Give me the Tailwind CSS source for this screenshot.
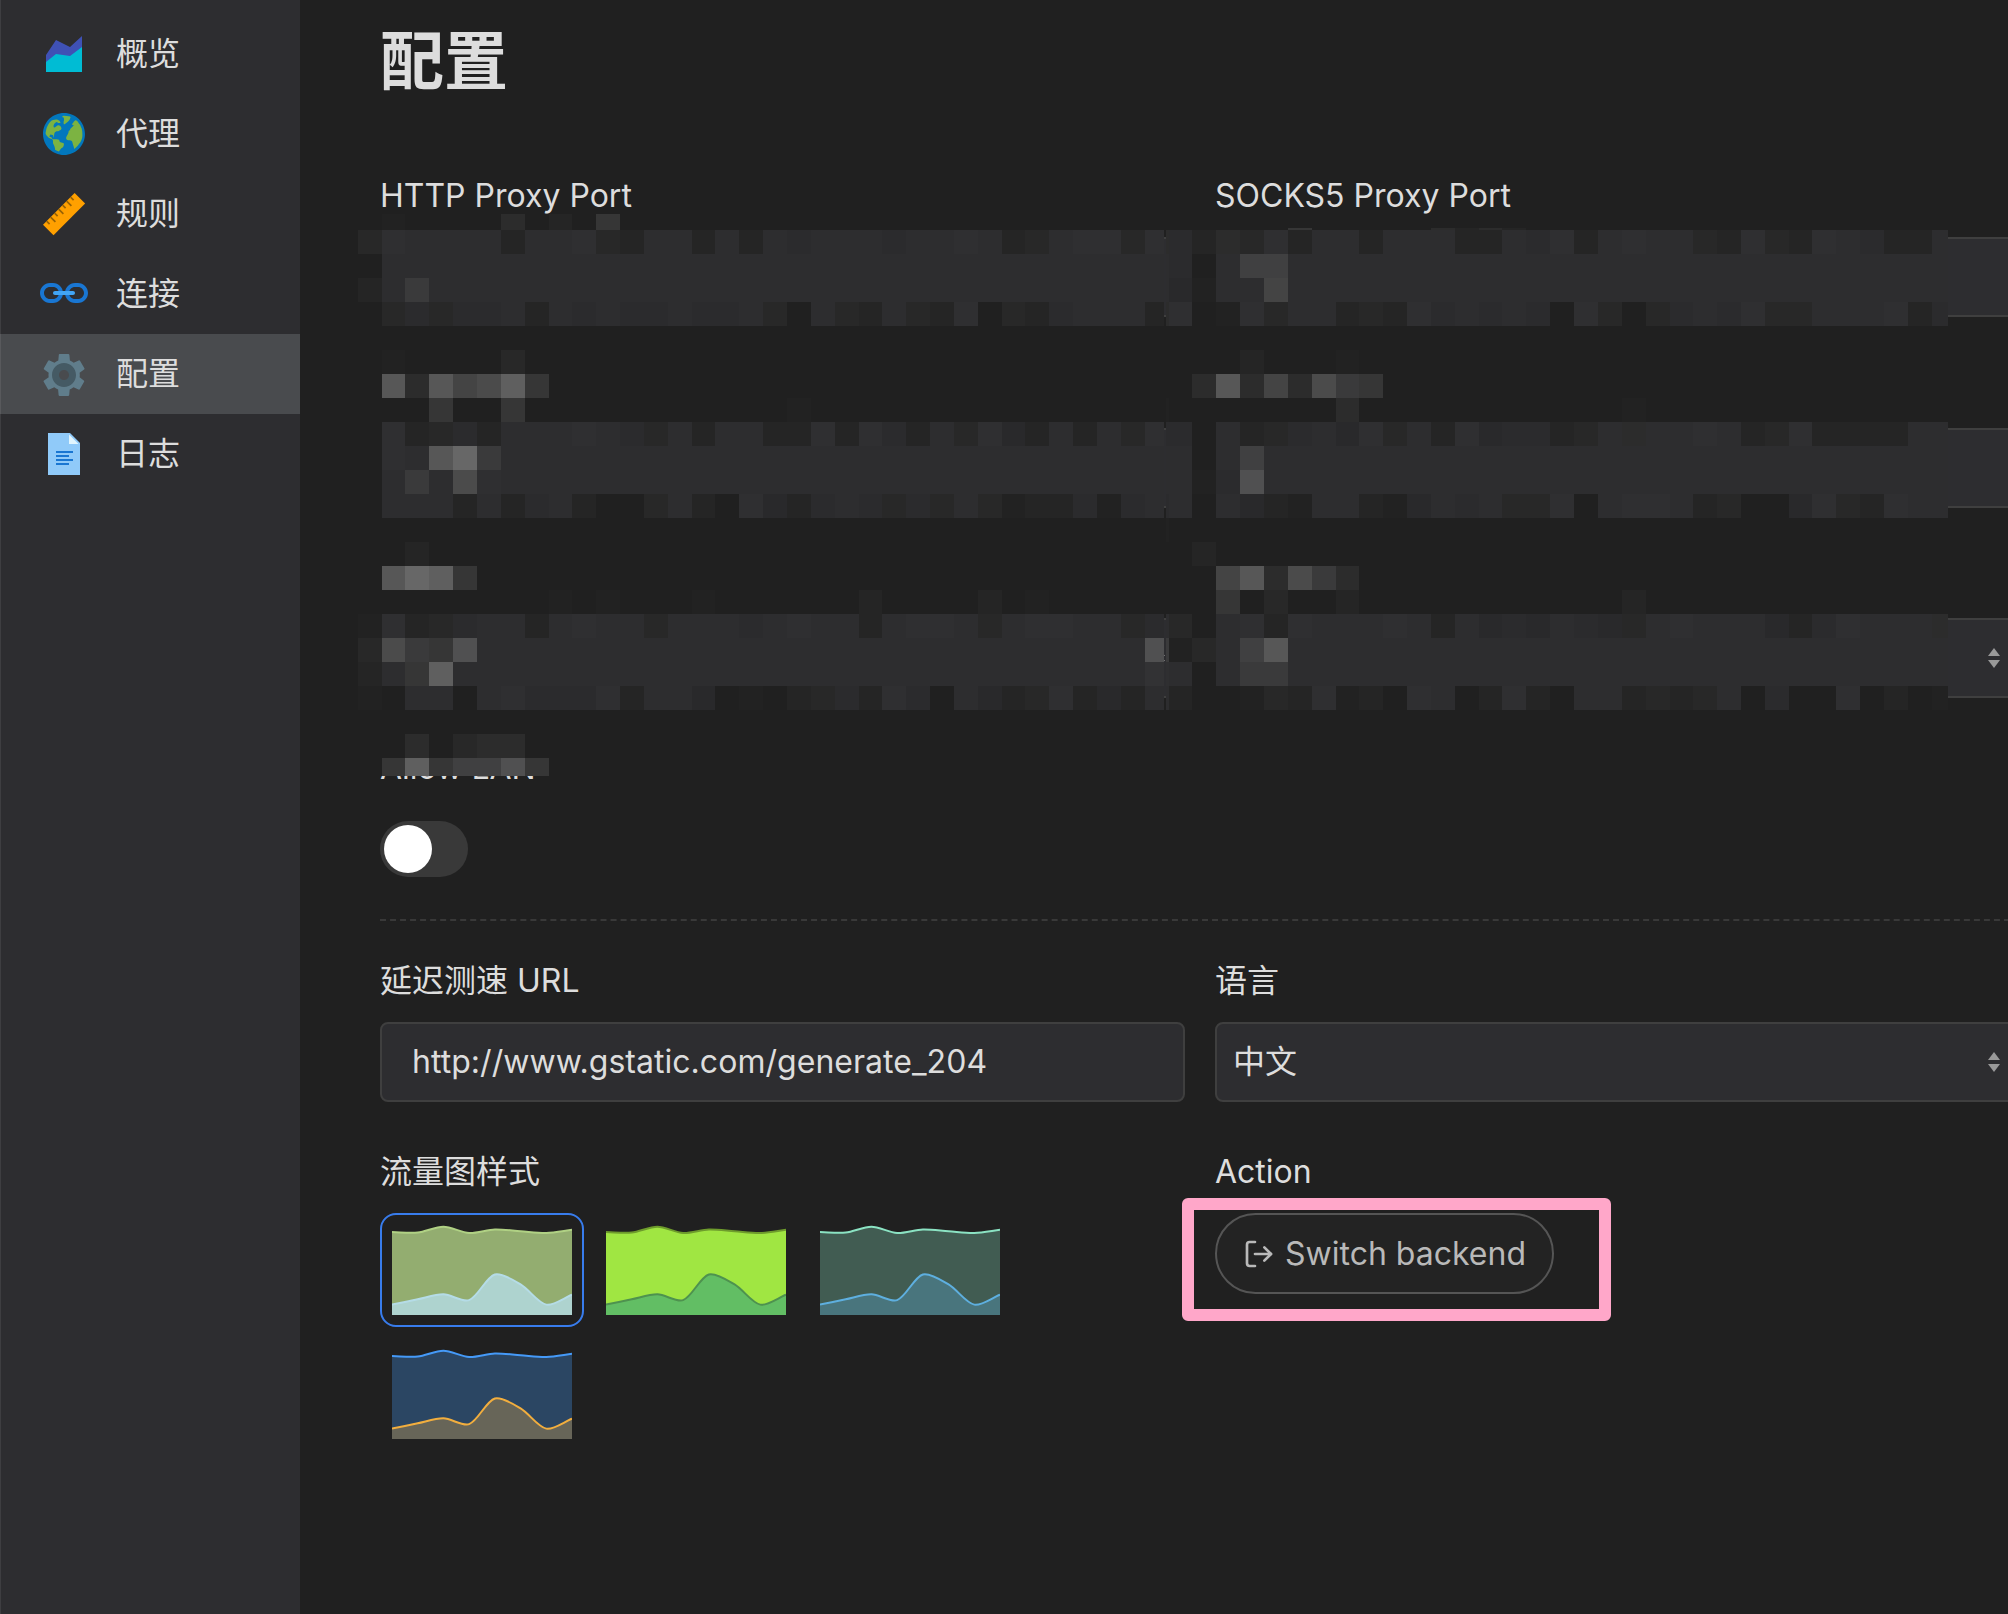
<!DOCTYPE html>
<html lang="zh-CN">
<head>
<meta charset="utf-8">
<title>yacd - 配置</title>
<script src="https://cdn.jsdelivr.net/npm/@tailwindcss/browser@4"></script>
</head>
<body class="bg-[#202020] overflow-hidden">
<div class="relative flex w-[2008px] h-[1614px] overflow-hidden bg-[#202020] text-[#dddddd] text-[32px] leading-[48px] font-['Inter','Noto_Sans_CJK_SC',sans-serif]">

  <!-- Sidebar -->
  <nav class="w-[300px] shrink-0 bg-[#2d2d30] border-l border-[#3e3e41] pt-3.5 flex flex-col">
    <a class="flex items-center h-20 pl-[39px] gap-7">
      <svg class="size-12" viewBox="0 0 48 48"><polygon fill="#3F51B5" points="42,37 6,37 6,25 16,10 30,17 42,6"/><polygon fill="#00BCD4" points="42,42 6,42 6,32 16,24 30,26 42,17"/></svg>
      <span>概览</span>
    </a>
    <a class="flex items-center h-20 pl-[39px] gap-7">
      <svg class="size-12" viewBox="0 0 48 48"><path fill="#7CB342" d="M24,4C13,4,4,13,4,24s9,20,20,20s20-9,20-20S35,4,24,4z"/><path fill="#0277BD" d="M45,24c0,11.7-9.5,21-21,21S3,35.7,3,24S12.3,3,24,3S45,12.3,45,24z M23.8,33.7c0-0.4-0.2-0.6-0.6-0.8c-1.3-0.4-2.5-0.4-3.6-1.5c-0.2-0.4-0.2-0.8-0.4-1.3c-0.4-0.4-1.5-0.6-2.1-0.8c-0.8,0-1.7,0-2.7,0c-0.4,0-1.1,0-1.5,0c-0.6-0.2-1.1-1.1-1.5-1.7c0-0.2,0-0.6-0.4-0.6c-0.4-0.2-0.8,0.2-1.3,0c-0.2-0.2-0.2-0.4-0.2-0.6c0-0.6,0.4-1.3,0.8-1.7c0.6-0.4,1.3,0.2,1.9,0.2c0.2,0,0.2,0,0.4,0.2c0.6,0.2,0.8,1,0.8,1.7c0,0.2,0,0.4,0,0.4c0,0.2,0.2,0.2,0.4,0.2c0.2-1.1,0.2-2.1,0.4-3.2c0-1.3,1.3-2.5,2.3-2.9c0.4-0.2,0.6,0.2,1.1,0c1.3-0.4,4.4-1.7,3.8-3.4c-0.4-1.5-1.7-2.9-3.4-2.7c-0.4,0.2-0.6,0.4-1,0.6c-0.6,0.4-1.9,1.7-2.5,1.7c-1.1-0.2-1.1-1.7-0.8-2.3c0.2-0.8,2.1-3.6,3.4-3.1c0.2,0.2,0.6,0.6,0.8,0.8c0.4,0.2,1.1,0.2,1.7,0.2c0.2,0,0.4,0,0.6-0.2c0.2-0.2,0.2-0.2,0.2-0.4c0-0.6-0.6-1.3-1-1.7c-0.4-0.4-1.1-0.8-1.7-1.1c-2.1-0.6-5.5,0.2-7.1,1.7s-2.9,4-3.8,6.1c-0.4,1.3-0.8,2.7-1,4.2c-0.2,1-0.4,1.9,0.2,2.9c0.6,1.3,1.9,2.5,3.2,3.4c0.8,0.6,2.5,0.6,3.4,1.7c0.6,0.8,0.4,1.9,0.4,2.9c0,1.3,0.8,2.3,1.3,3.4c0.2,0.6,0.4,1.5,0.6,2.1c0,0.2,0.2,1.5,0.2,1.7c1.3,0.6,2.3,1.3,3.8,1.7c0.2,0,1-1.3,1-1.5c0.6-0.6,1.1-1.5,1.7-1.9c0.4-0.2,0.8-0.4,1.3-0.8c0.4-0.4,0.6-1.3,0.8-1.9C23.8,35.1,24,34.3,23.8,33.7z M24.2,14.3c0.2,0,0.4-0.2,0.8-0.4c0.6-0.4,1.3-1.1,1.9-1.5s1.3-1.1,1.7-1.5c0.6-0.4,1.1-1.3,1.3-1.9c0.2-0.4,0.8-1.3,0.6-1.9c-0.2-0.4-1.3-0.6-1.7-0.8c-1.7-0.4-3.1-0.6-4.8-0.6c-0.6,0-1.5,0.2-1.7,0.8c-0.2,1.1,0.6,0.8,1.5,1.1c0,0,0.2,1.7,0.2,1.9c0.2,1-0.4,1.7-0.4,2.7c0,0.6,0,1.7,0.4,2.1L24.2,14.3z M41.8,29c0.2-0.4,0.2-1.1,0.4-1.5c0.2-1,0.2-2.1,0.2-3.1c0-2.1-0.2-4.2-0.8-6.1c-0.4-0.6-0.6-1.3-0.8-1.9c-0.4-1.1-1-2.1-1.9-2.9c-0.8-1.1-1.9-4-3.8-3.1c-0.6,0.2-1,1-1.5,1.5c-0.4,0.6-0.8,1.3-1.3,1.9c-0.2,0.2-0.4,0.6-0.2,0.8c0,0.2,0.2,0.2,0.4,0.2c0.4,0.2,0.6,0.2,1,0.4c0.2,0,0.4,0.2,0.2,0.4c0,0,0,0.2-0.2,0.2c-1,1.1-2.1,1.9-3.1,2.9c-0.2,0.2-0.4,0.6-0.4,0.8c0,0.2,0.2,0.2,0.2,0.4c0,0.2-0.2,0.2-0.4,0.4c-0.4,0.2-0.8,0.4-1.1,0.6c-0.2,0.4,0,1.1-0.2,1.5c-0.2,1.1-0.8,1.9-1.3,2.9c-0.4,0.6-0.6,1.3-1,1.9c0,0.8-0.2,1.5,0.2,2.1c1,1.5,2.9,0.6,4.4,1.3c0.4,0.2,0.8,0.2,1.1,0.6c0.6,0.6,0.6,1.7,0.8,2.3c0.2,0.8,0.4,1.7,0.8,2.5c0.2,1,0.6,2.1,0.8,2.9c1.9-1.5,3.6-3.1,4.8-5.2C40.6,32.4,41.2,30.7,41.8,29z"/></svg>
      <span>代理</span>
    </a>
    <a class="flex items-center h-20 pl-[39px] gap-7">
      <svg class="size-12" viewBox="0 0 48 48"><polygon fill="#FFA000" points="3,34.7 34.6,2.9 45.1,13.4 13.5,45.2"/><path stroke="#9A6304" stroke-width="1.7" fill="none" d="M6.6 31.1l3 3M10.6 27.1l4.8 4.8M14.6 23.1l3 3M18.6 19.1l4.8 4.8M22.6 15.1l3 3M26.6 11.1l4.8 4.8M30.6 7.1l3 3"/></svg>
      <span>规则</span>
    </a>
    <a class="flex items-center h-20 pl-[39px] gap-7">
      <svg class="size-12" viewBox="0 0 48 48"><g fill="#1976D2"><path d="M38,13h-3c-5.5,0-10,4.5-10,10s4.5,10,10,10h3c5.5,0,10-4.5,10-10S43.5,13,38,13z M38,29h-3c-3.3,0-6-2.7-6-6s2.7-6,6-6h3c3.3,0,6,2.7,6,6S41.3,29,38,29z"/><path d="M13,13h-3C4.5,13,0,17.5,0,23s4.5,10,10,10h3c5.5,0,10-4.5,10-10S18.5,13,13,13z M13,29h-3c-3.3,0-6-2.7-6-6s2.7-6,6-6h3c3.3,0,6,2.7,6,6S16.3,29,13,29z"/></g><path fill="#42A5F5" d="M33,21H15c-1.1,0-2,0.9-2,2s0.9,2,2,2h18c1.1,0,2-0.9,2-2S34.1,21,33,21z"/></svg>
      <span>连接</span>
    </a>
    <a class="flex items-center h-20 pl-[39px] gap-7 bg-[#494b4e] -ml-px border-l border-[#58595c]">
      <svg class="size-12" viewBox="0 0 48 48"><path fill="#607D8B" d="M39.6,27.2c0.1-0.7,0.2-1.4,0.2-2.2s-0.1-1.5-0.2-2.2l4.5-3.2c0.4-0.3,0.6-0.9,0.3-1.4L40,10.8c-0.3-0.5-0.8-0.7-1.3-0.4l-5,2.3c-1.2-0.9-2.4-1.6-3.8-2.2l-0.5-5.5c-0.1-0.5-0.5-0.9-1-0.9h-8.6c-0.5,0-1,0.4-1,0.9l-0.5,5.5c-1.4,0.6-2.7,1.3-3.8,2.2l-5-2.3c-0.5-0.2-1.1,0-1.3,0.4l-4.3,7.4c-0.3,0.5-0.1,1.1,0.3,1.4l4.5,3.2c-0.1,0.7-0.2,1.4-0.2,2.2s0.1,1.5,0.2,2.2L4,30.4c-0.4,0.3-0.6,0.9-0.3,1.4L8,39.2c0.3,0.5,0.8,0.7,1.3,0.4l5-2.3c1.2,0.9,2.4,1.6,3.8,2.2l0.5,5.5c0.1,0.5,0.5,0.9,1,0.9h8.6c0.5,0,1-0.4,1-0.9l0.5-5.5c1.4-0.6,2.7-1.3,3.8-2.2l5,2.3c0.5,0.2,1.1,0,1.3-0.4l4.3-7.4c0.3-0.5,0.1-1.1-0.3-1.4L39.6,27.2z M24,35c-5.5,0-10-4.5-10-10c0-5.5,4.5-10,10-10c5.5,0,10,4.5,10,10C34,30.5,29.5,35,24,35z"/><path fill="#455A64" d="M24,13c-6.6,0-12,5.4-12,12c0,6.6,5.4,12,12,12s12-5.4,12-12C36,18.4,30.6,13,24,13z M24,30c-2.8,0-5-2.2-5-5c0-2.8,2.2-5,5-5s5,2.2,5,5C29,27.8,26.8,30,24,30z"/></svg>
      <span>配置</span>
    </a>
    <a class="flex items-center h-20 pl-[39px] gap-7">
      <svg class="size-12" viewBox="0 0 48 48"><polygon fill="#90CAF9" points="40,45 8,45 8,3 30,3 40,13"/><polygon fill="#E1F5FE" points="38.5,14 29,14 29,4.5"/><g fill="#1976D2"><rect x="16" y="21" width="17" height="2"/><rect x="16" y="25" width="13" height="2"/><rect x="16" y="29" width="17" height="2"/><rect x="16" y="33" width="13" height="2"/></g></svg>
      <span>日志</span>
    </a>
  </nav>

  <!-- Config page -->
  <main class="w-[1720px] shrink-0 pl-20 pt-[13px]">
    <h1 class="text-[64px] leading-[96px] font-bold">配置</h1>

    <section class="mt-[62px] grid grid-cols-[805px_805px] gap-x-[30px] grid-rows-[191px_190px_191px_134px]">
      <div>
        <div class="h-[66px] pt-px">HTTP Proxy Port</div>
        <div class="h-20 rounded-lg border-2 border-[#3f3f3f] bg-[#2d2d30]"></div>
      </div>
      <div>
        <div class="h-[66px] pt-px">SOCKS5 Proxy Port</div>
        <div class="h-20 rounded-lg border-2 border-[#3f3f3f] bg-[#2d2d30]"></div>
      </div>
      <div class="pt-[66px]">
        <div class="h-20 rounded-lg border-2 border-[#3f3f3f] bg-[#2d2d30]"></div>
      </div>
      <div class="pt-[66px]">
        <div class="h-20 rounded-lg border-2 border-[#3f3f3f] bg-[#2d2d30]"></div>
      </div>
      <div class="pt-[66px]">
        <div class="h-20 rounded-lg border-2 border-[#3f3f3f] bg-[#2d2d30] flex items-center justify-end pr-[18px]">
          <svg class="w-3 h-5" viewBox="0 0 12 20" fill="#999999"><path d="M6 0L12 8H0zM6 20L12 12H0z"/></svg>
        </div>
      </div>
      <div class="pt-[66px]">
        <div class="h-20 rounded-lg border-2 border-[#3f3f3f] bg-[#2d2d30] flex items-center justify-end pr-[18px]">
          <svg class="w-3 h-5" viewBox="0 0 12 20" fill="#999999"><path d="M6 0L12 8H0zM6 20L12 12H0z"/></svg>
        </div>
      </div>
      <div>
        <div class="h-[78px] pt-px">Allow LAN</div>
        <div class="w-[88px] h-14 rounded-full bg-[#393939] p-1"><div class="size-12 rounded-full bg-white"></div></div>
      </div>
    </section>

    <div class="mt-[42px] mb-[35px] border-t-2 border-dashed border-[#393939]"></div>

    <section class="grid grid-cols-[805px_805px] gap-x-[30px] gap-y-[45px]">
      <div>
        <div class="h-[66px] pt-px">延迟测速 URL</div>
        <div class="h-20 rounded-lg border-2 border-[#3f3f3f] bg-[#2d2d30] flex items-center pl-[30px] tracking-[0.035px]">http://www.gstatic.com/generate_204</div>
      </div>
      <div>
        <div class="h-[66px] pt-px">语言</div>
        <div class="h-20 rounded-lg border-2 border-[#3f3f3f] bg-[#2d2d30] flex items-center justify-between pl-4 pr-[18px]">
          <span>中文</span>
          <svg class="w-3 h-5" viewBox="0 0 12 20" fill="#999999"><path d="M6 0L12 8H0zM6 20L12 12H0z"/></svg>
        </div>
      </div>
      <div>
        <div class="h-[66px] pt-px">流量图样式</div>
        <div class="flex flex-wrap gap-2.5 w-[640px]">
          <div class="rounded-2xl border-2 border-[#387cec] p-2.5"><svg class="chart w-[180px] h-[90px]" viewBox="0 0 180 90" data-top="rgba(176,209,132,.8)" data-topline="rgb(176,209,132)" data-low="rgba(181,220,231,.8)" data-lowline="rgb(181,220,231)"></svg></div>
          <div class="rounded-2xl border-2 border-transparent p-2.5"><svg class="chart w-[180px] h-[90px]" viewBox="0 0 180 90" data-top="rgb(160,230,66)" data-topline="rgb(110,156,44)" data-low="rgb(98,190,100)" data-lowline="rgb(78,146,79)"></svg></div>
          <div class="rounded-2xl border-2 border-transparent p-2.5"><svg class="chart w-[180px] h-[90px]" viewBox="0 0 180 90" data-top="rgba(139,227,195,.31)" data-topline="rgb(139,227,195)" data-low="rgba(94,175,223,.31)" data-lowline="rgb(94,175,223)"></svg></div>
          <div class="rounded-2xl border-2 border-transparent p-2.5"><svg class="chart w-[180px] h-[90px]" viewBox="0 0 180 90" data-top="rgba(69,154,248,.31)" data-topline="rgb(69,154,248)" data-low="rgba(242,174,62,.3)" data-lowline="rgb(242,174,62)"></svg></div>
        </div>
      </div>
      <div>
        <div class="h-[66px] pt-px">Action</div>
        <div class="inline-flex items-center h-[81px] w-[339px] rounded-full border-2 border-[#555555] bg-[#232323] text-[#b9b9b9] pl-[26px] gap-2.5 whitespace-nowrap">
          <svg class="size-8" viewBox="0 0 24 24" fill="none" stroke="currentColor" stroke-width="2" stroke-linecap="round" stroke-linejoin="round"><path d="M9 21H5a2 2 0 0 1-2-2V5a2 2 0 0 1 2-2h4"/><polyline points="16 17 21 12 16 7"/><line x1="21" y1="12" x2="9" y2="12"/></svg>
          <span>Switch backend</span>
        </div>
      </div>
    </section>
  </main>

  <!-- Redaction mosaic over the port and mode fields -->
  <svg id="mosaic" class="absolute left-0 top-0 w-[2008px] h-[900px]" viewBox="0 0 2008 900" shape-rendering="crispEdges"></svg>

  <!-- Highlight frame around the action button -->
  <div class="absolute left-[1182px] top-[1198px] w-[429px] h-[123px] border-12 border-[#ffa7c9] rounded-md"></div>
</div>

<script>
const NS = 'http://www.w3.org/2000/svg';
const add = (svg, tag, attrs) => {
  const el = document.createElementNS(NS, tag);
  for (const k in attrs) el.setAttribute(k, attrs[k]);
  svg.appendChild(el);
};

// Traffic chart previews
const down = [184, 183, 196, 182, 190, 186, 182, 189];
const up = [23, 35, 46, 33, 90, 68, 23, 45];
const spline = (vals) => {
  const p = vals.map((v, i) => [i * 180 / 7, 90 - v * 0.4505]);
  const ctl = p.map((c, i) => {
    const a = p[i - 1] || c, b = p[i + 1] || c;
    const d1 = Math.hypot(c[0] - a[0], c[1] - a[1]), d2 = Math.hypot(b[0] - c[0], b[1] - c[1]);
    const f1 = 0.3 * d1 / (d1 + d2), f2 = 0.3 * d2 / (d1 + d2);
    return [c[0] - f1 * (b[0] - a[0]), c[1] - f1 * (b[1] - a[1]), c[0] + f2 * (b[0] - a[0]), c[1] + f2 * (b[1] - a[1])];
  });
  let d = `M${p[0]}`;
  for (let i = 1; i < p.length; i++) d += `C${ctl[i - 1][2]},${ctl[i - 1][3]} ${ctl[i][0]},${ctl[i][1]} ${p[i]}`;
  return d;
};
document.querySelectorAll('.chart').forEach((svg) => {
  const c = svg.dataset;
  for (const [vals, fill, line] of [[down, c.top, c.topline], [up, c.low, c.lowline]]) {
    const d = spline(vals);
    add(svg, 'path', { d: d + 'V90H0Z', fill });
    add(svg, 'path', { d, fill: 'none', stroke: line, 'stroke-width': 2 });
  }
});

// Mosaic cells: one character per column, keyed to a shade
const shades = {
  0: '#202020', 1: '#222222', 2: '#252525', 3: '#282828', 4: '#2c2c2c', 5: '#29292b', 6: '#2b2b2d', 7: '#2d2d2f', 8: '#2f2f31', 9: '#323234',
  A: '#363636', B: '#3a3a3b', C: '#404041', D: '#444444', E: '#4b4b4b', F: '#505051', G: '#575757', H: '#5f5f5f', I: '#676767'
};
const xs = [358,382,405,429,453,477,501,525,549,572,596,620,644,668,692,715,739,763,787,811,835,859,882,906,930,954,978,1002,1025,1049,1073,1097,1121,1145,1166,1169,1192,1216,1240,1264,1288,1312,1336,1359,1383,1407,1431,1455,1479,1502,1526,1550,1574,1598,1622,1646,1670,1693,1717,1741,1765,1789,1812,1836,1860,1884,1908,1932,1948];
const S = '777777777777777777777777777777777777777777777777';
const Z = (cells) => { const r = Array(68).fill('0'); for (const k in cells) r[k] = cells[k]; return r.join(''); };
const rows = [
  [230, '3877772778' + '3277272767' + '7767787237' + '8838462438' + '2772777227' + '6827877328' + '32876227'],
  [254, '0' + S.slice(0, 34) + '607CC' + S.slice(0, 28)],
  [278, '27B' + S.slice(0, 32) + '5177D' + S.slice(0, 28)],
  [302, '0363667276' + '7667667307' + '3273280326' + '7772480183' + '7723286767' + '6083036768' + '33777826'],
  [326, Z({})],
  [350, Z({ 1: '1', 6: '3', 38: '2', 42: '1' })],
  [374, Z({ 1: 'G', 2: '4', 3: 'G', 4: 'D', 5: 'E', 6: 'H', 7: 'A', 36: '4', 37: 'G', 38: '4', 39: 'D', 40: '4', 41: 'E', 42: 'B', 43: 'A' })],
  [398, Z({ 3: 'A', 6: 'A', 18: '1', 34: '1', 42: '4', 54: '1' })],
  [422, '0823627778' + '7637277228' + '2862738527' + '2738660723' + '6758372856' + '6237477872' + '38222277'],
  [446, '087GIB' + S.slice(0, 30) + '07C' + S.slice(0, 29)],
  [470, '07B7E8' + S.slice(0, 30) + '16F' + S.slice(0, 29)],
  [494, '0777272672' + '0037208526' + '7636373122' + '6167670752' + '1772157673' + '3807887230' + '05832877'],
  [518, Z({ 34: '1' })],
  [542, Z({ 2: '2', 36: '2' })],
  [566, Z({ 1: 'G', 2: 'I', 3: 'H', 4: 'A', 37: 'D', 38: 'G', 39: '4', 40: 'E', 41: 'B', 42: '4' })],
  [590, Z({ 8: '1', 10: '1', 14: '1', 21: '2', 26: '2', 28: '1', 37: 'A', 39: '3', 42: '2', 54: '2' })],
  [614, '1823677278' + '7737776787' + '7278873788' + '7736730782' + '8777872756' + '5765378777' + '52687774'],
  [638, '3EBAF' + S.slice(0, 28) + 'FB137CG' + S.slice(0, 28)],
  [662, '27AH' + S.slice(0, 29) + '98707BB' + S.slice(0, 28)],
  [686, '1077078666' + '8277501023' + '6286075238' + '2527720013' + '2812087028' + '2077232370' + '60080201'],
  [710, Z({})]
];
const mosaic = document.getElementById('mosaic');
const cell = (i, y, h, ch) => add(mosaic, 'rect', { x: xs[i], y, width: (i === 33 ? 1164 : xs[i + 1]) - xs[i], height: h, fill: shades[ch] });
for (const [y, line] of rows) [...line].forEach((ch, i) => cell(i, y, 24, ch));
// Partial rows on the left block's top and bottom edges
for (const [i, ch] of [[1, '1'], [6, '4'], [8, '2'], [10, 'A']]) cell(i, 214, 16, ch);
[...Z({ 2: '4', 4: '3', 5: '4', 6: '4' })].slice(0, 34).forEach((ch, i) => cell(i, 734, 24, ch));
[...Z({ 1: 'A', 2: 'H', 3: 'A', 4: 'C', 5: 'C', 6: 'F', 7: 'A' })].slice(0, 34).forEach((ch, i) => cell(i, 758, 18, ch));
for (const [i, ch] of [[40, 'A'], [46, '4'], [47, '2'], [48, '4'], [49, '2']]) cell(i, 228, 2, ch);
</script>
</body>
</html>
